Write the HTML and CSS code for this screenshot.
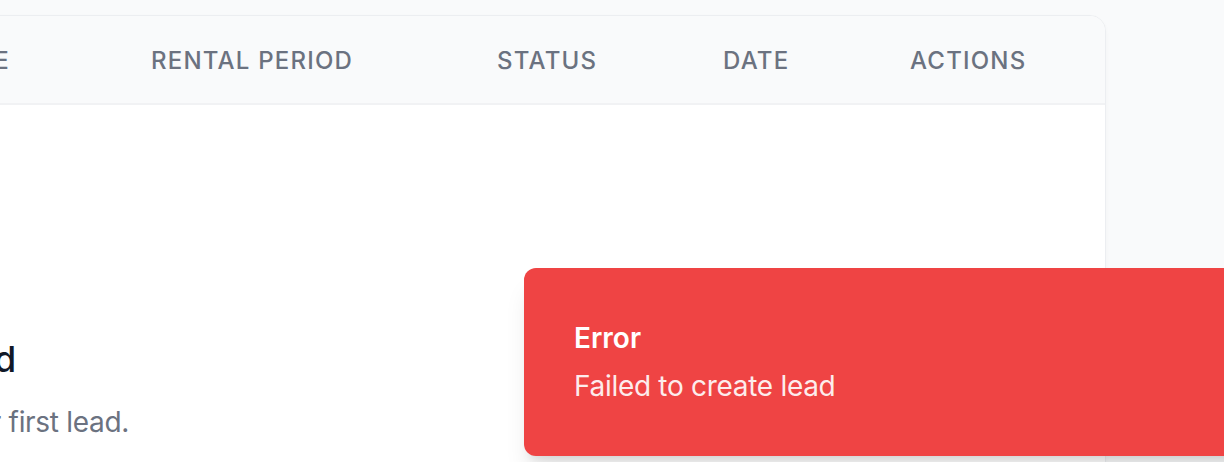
FILE: index.html
```html
<!DOCTYPE html>
<html lang="en">
<head>
<meta charset="utf-8">
<title>Leads</title>
<link rel="stylesheet" href="styles.css">
</head>
<body>
<main class="page">
  <section class="card">
    <div class="thead">
      <div class="th">Customer</div>
      <div class="th">Vehicle</div>
      <div class="th">Rental Period</div>
      <div class="th">Status</div>
      <div class="th">Date</div>
      <div class="th">Actions</div>
    </div>
    <div class="empty">
      <svg class="empty-icon" viewBox="0 0 24 24" fill="none" stroke="#9ca3af" stroke-width="1.5" stroke-linecap="round" stroke-linejoin="round"><path d="M9 12h6m-6 4h6M7 3h7l5 5v11a2 2 0 0 1-2 2H7a2 2 0 0 1-2-2V5a2 2 0 0 1 2-2z"/></svg>
      <h3 class="empty-title">No leads found</h3>
      <p class="empty-text">Get started by creating your first lead.</p>
    </div>
  </section>
</main>
<div class="toast" role="alert">
  <div class="toast-title">Error</div>
  <div class="toast-desc">Failed to create lead</div>
</div>
</body>
</html>
```
FILE: styles.css
```css
html, body {
  margin: 0;
  padding: 0;
}
body {
  background: #f9fafb;
  font-family: Inter, "Noto Sans", "Liberation Sans", sans-serif;
  width: 1224px;
  height: 462px;
  overflow: hidden;
  position: relative;
}
.page {
  padding-top: 15px;
}
.card {
  margin-left: -1338px;
  width: 2444px;
  box-sizing: border-box;
  background: #ffffff;
  border: 1px solid #eceef1;
  border-radius: 16px;
  box-shadow: 0 2px 4px rgba(0, 0, 0, 0.03);
  overflow: hidden;
}
.thead {
  display: grid;
  grid-template-columns: 1fr 251px 346px 226px 187px 243px;
  background: #f9fafb;
  border-bottom: 2px solid #f1f2f4;
}
.th {
  padding: 25px 48px 23px;
  line-height: 39px;
  font-size: 24px;
  font-weight: 500;
  letter-spacing: 1.2px;
  text-transform: uppercase;
  color: #6b7280;
  white-space: nowrap;
}
.empty {
  display: flex;
  flex-direction: column;
  align-items: center;
  text-align: center;
  padding: 96px 48px;
}
.empty-icon {
  width: 96px;
  height: 96px;
}
.empty-title {
  margin: 34px 0 0;
  font-size: 36px;
  line-height: 56px;
  font-weight: 500;
  letter-spacing: 0.3px;
  color: #111827;
}
.empty-text {
  margin: 15px 0 0;
  font-size: 28px;
  line-height: 40px;
  letter-spacing: -0.3px;
  color: #6b7280;
}
.toast {
  position: absolute;
  left: 524px;
  top: 268px;
  width: 840px;
  height: 188px;
  box-sizing: border-box;
  padding: 50px;
  background: #ef4444;
  border-radius: 12px;
  box-shadow: 0 20px 25px -5px rgba(0, 0, 0, 0.1), 0 8px 10px -6px rgba(0, 0, 0, 0.1);
  color: #ffffff;
}
.toast-title {
  font-size: 28px;
  line-height: 40px;
  font-weight: 600;
}
.toast-desc {
  margin-top: 8px;
  font-size: 28px;
  line-height: 40px;
  letter-spacing: -0.3px;
  opacity: 0.9;
}
```
